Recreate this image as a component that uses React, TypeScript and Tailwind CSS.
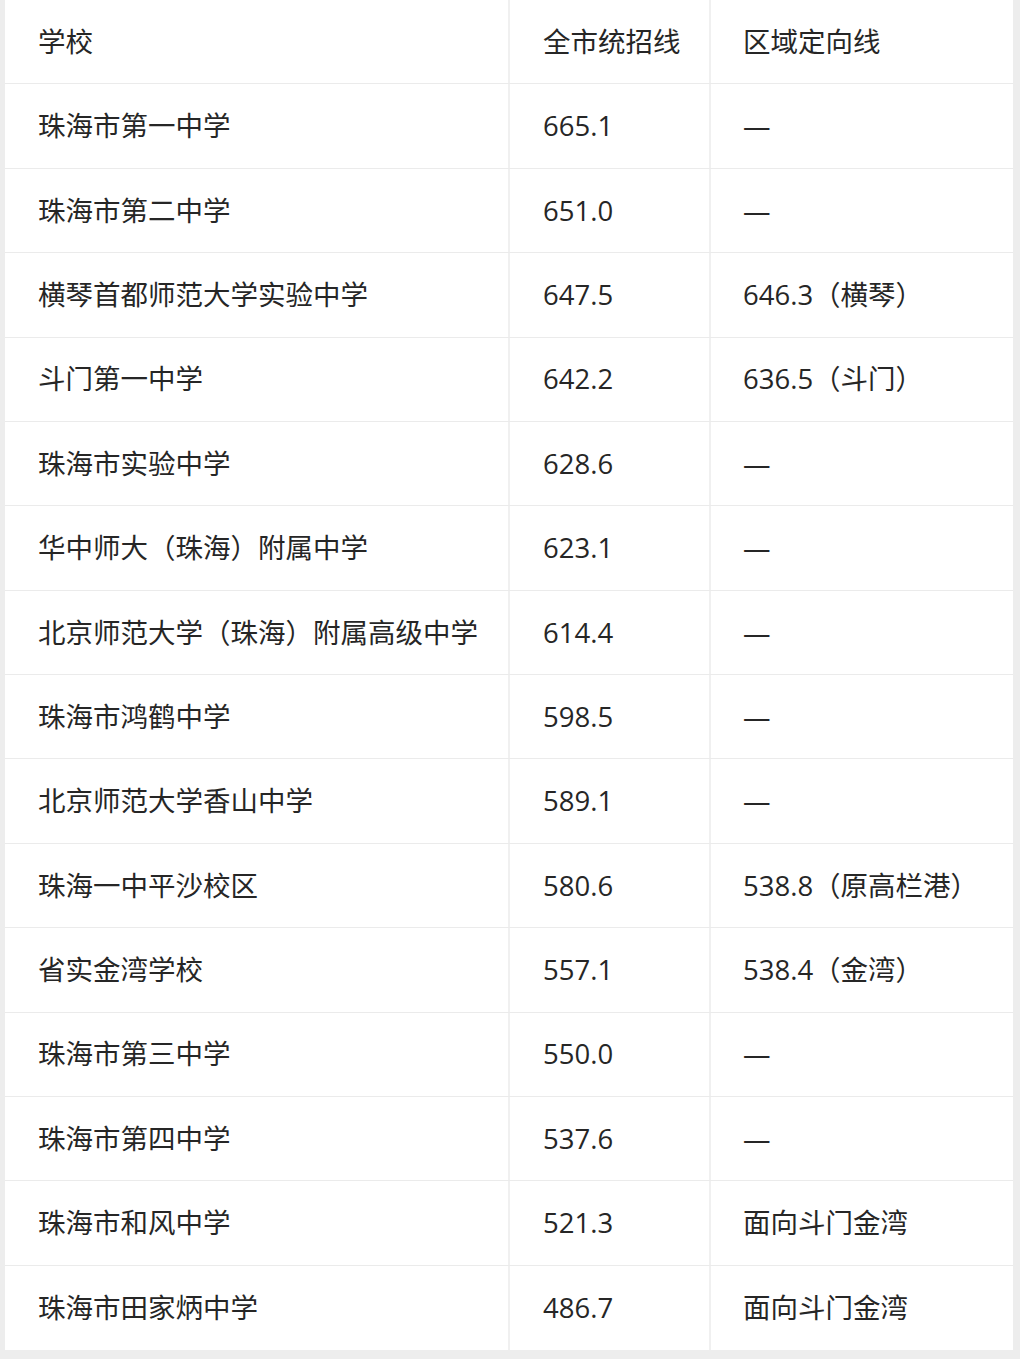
import React from "react";

const rows: [string, string, string][] = [
  ["珠海市第一中学", "665.1", "—"],
  ["珠海市第二中学", "651.0", "—"],
  ["横琴首都师范大学实验中学", "647.5", "646.3（横琴）"],
  ["斗门第一中学", "642.2", "636.5（斗门）"],
  ["珠海市实验中学", "628.6", "—"],
  ["华中师大（珠海）附属中学", "623.1", "—"],
  ["北京师范大学（珠海）附属高级中学", "614.4", "—"],
  ["珠海市鸿鹤中学", "598.5", "—"],
  ["北京师范大学香山中学", "589.1", "—"],
  ["珠海一中平沙校区", "580.6", "538.8（原高栏港）"],
  ["省实金湾学校", "557.1", "538.4（金湾）"],
  ["珠海市第三中学", "550.0", "—"],
  ["珠海市第四中学", "537.6", "—"],
  ["珠海市和风中学", "521.3", "面向斗门金湾"],
  ["珠海市田家炳中学", "486.7", "面向斗门金湾"],
];

function Row({ cells, last }: { cells: [string, string, string]; last?: boolean }) {
  return (
    <div
      className={
        "grid grid-cols-[505px_201px_1fr] h-[84.375px] " +
        (last ? "" : "border-b border-[#ebebeb]")
      }
    >
      <div className="flex items-center pl-[33px] border-r-2 border-[#f0f0f0]">{cells[0]}</div>
      <div className="flex items-center pl-[33px] border-r-2 border-[#f0f0f0]">{cells[1]}</div>
      <div className="flex items-center pl-[32px]">{cells[2]}</div>
    </div>
  );
}

export default function App() {
  return (
    <div className="w-[1020px] h-[1359px] bg-[#ededed] pl-[5px] pr-[7px] pb-[9px]">
      <div
        className="bg-white h-[1350px] text-[27.5px] text-[#262626] leading-none"
        style={{ fontFamily: '"Open Sans", "Noto Sans CJK SC", sans-serif' }}
      >
        <Row cells={["学校", "全市统招线", "区域定向线"]} />
        {rows.map((r, i) => (
          <Row key={i} cells={r} last={i === rows.length - 1} />
        ))}
      </div>
    </div>
  );
}
